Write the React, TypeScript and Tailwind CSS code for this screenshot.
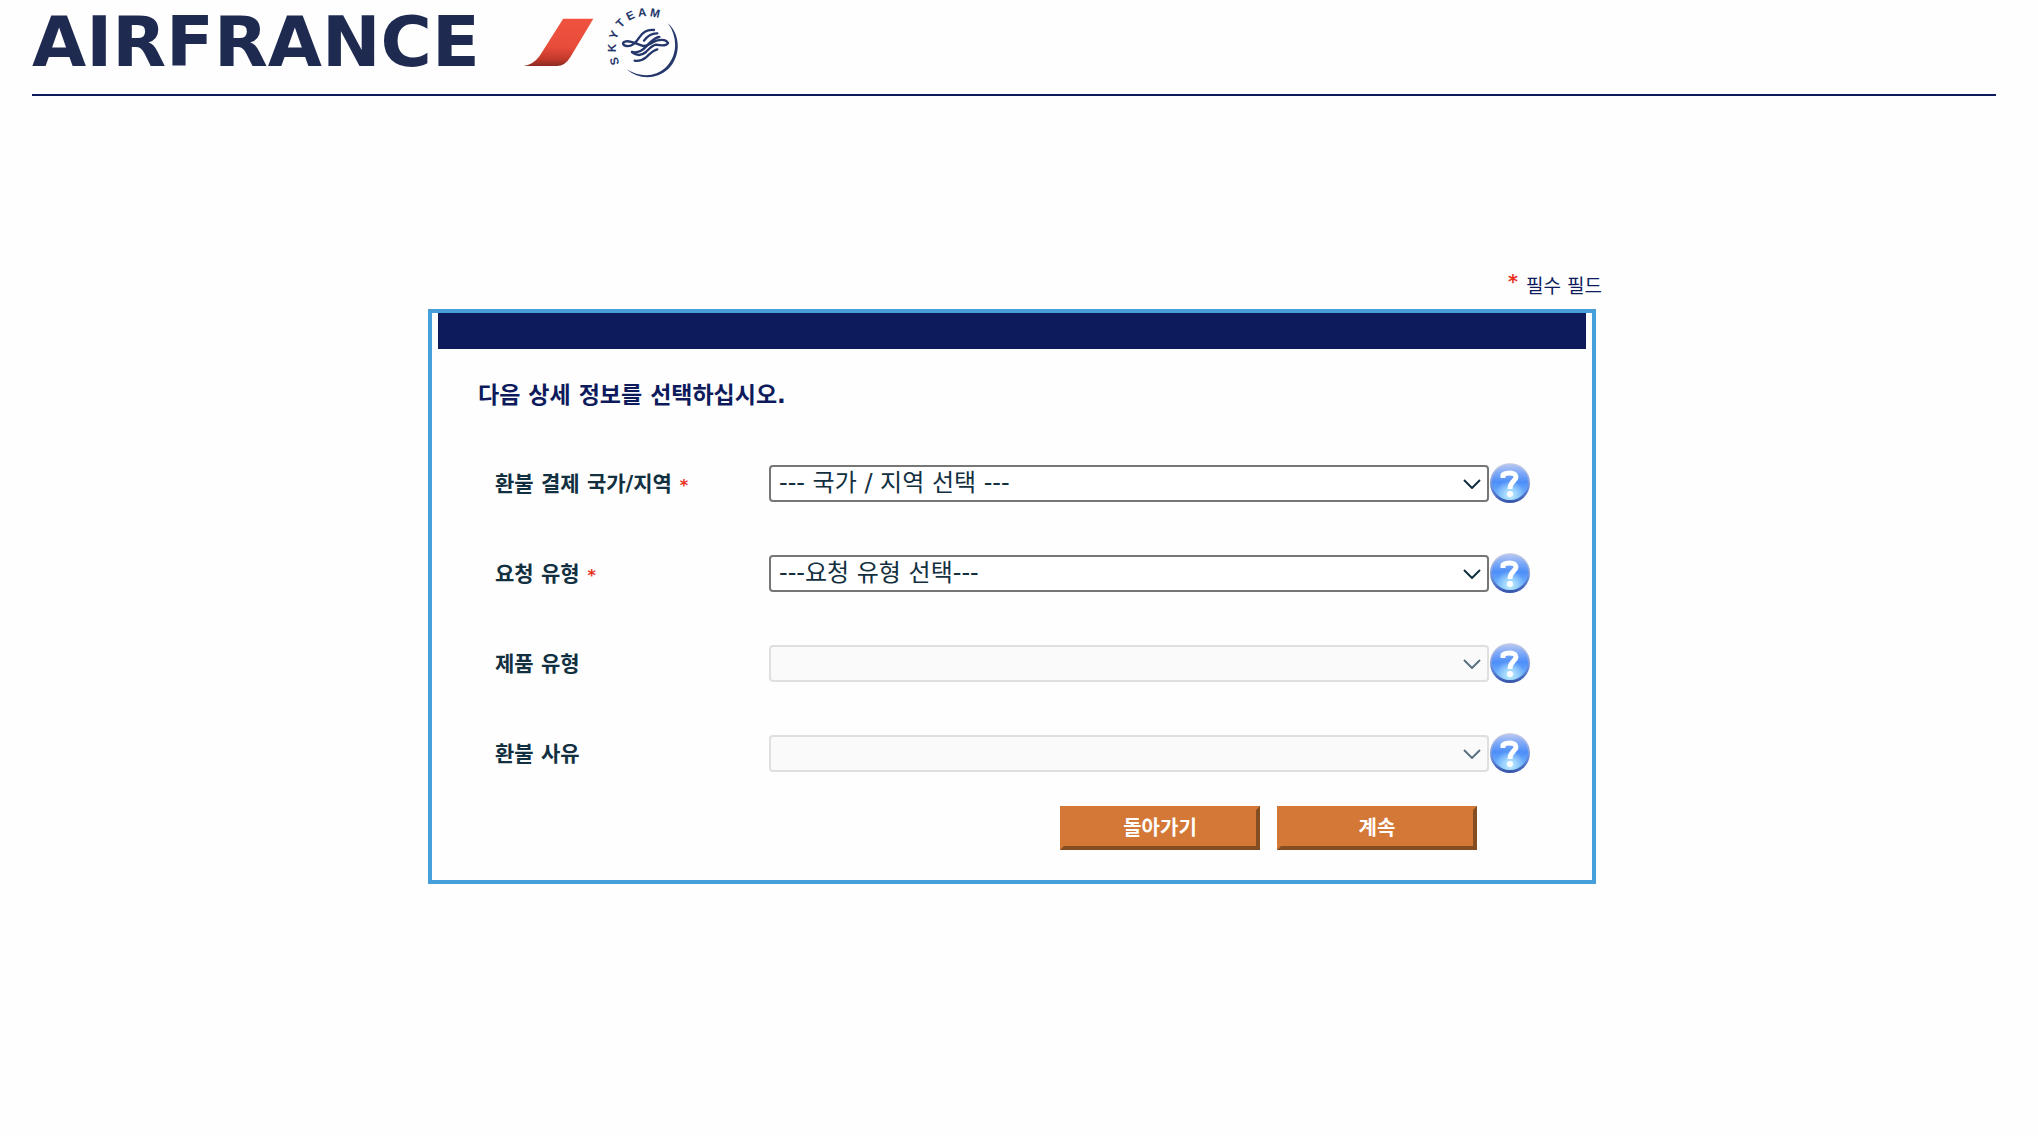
import { ChangeEvent, useState } from "react";

interface Field {
  id: string;
  label: string;
  options: string[];
  required?: boolean;
  disabled?: boolean;
}

const FIELDS: Field[] = [
  {
    id: "country",
    label: "환불 결제 국가/지역",
    options: ["--- 국가 / 지역 선택 ---"],
    required: true,
  },
  {
    id: "requestType",
    label: "요청 유형",
    options: ["---요청 유형 선택---"],
    required: true,
  },
  { id: "productType", label: "제품 유형", options: [""], disabled: true },
  { id: "refundReason", label: "환불 사유", options: [""], disabled: true },
];

// Letters set round the SkyTeam ring: [letter, x, y, angle]
const RING: [string, number, number, number][] = [
  ["S", 835, 181, -104],
  ["K", 828, 144, -88],
  ["Y", 833, 109, -66],
  ["T", 850, 78, -46],
  ["E", 876, 57, -25],
  ["A", 907, 49, -5],
  ["M", 943, 51, 12],
];

function TailFlame() {
  return (
    <svg className="w-[73px] h-[52px]" viewBox="550 40 220 156" aria-hidden="true">
      <defs>
        <linearGradient id="flame" x1="0" y1="0" x2="0" y2="1">
          <stop offset="0" stopColor="#ef5340" />
          <stop offset="0.6" stopColor="#e84c3a" />
          <stop offset="0.85" stopColor="#c33a2c" />
          <stop offset="1" stopColor="#8c2a22" />
        </linearGradient>
      </defs>
      <path
        d="M674 48H765L696 163Q680 190 655 190H555Q584 186 603 160Z"
        fill="url(#flame)"
      />
    </svg>
  );
}

function SkyTeam() {
  return (
    <svg
      className="w-[73px] h-[73px]"
      viewBox="798 18 219 219"
      role="img"
      aria-label="SkyTeam"
    >
      <g
        fill="#24366b"
        fontFamily="'Liberation Sans', sans-serif"
        fontWeight="700"
        fontSize="35"
        textAnchor="middle"
      >
        {RING.map(([letter, x, y, angle]) => (
          <text key={letter} transform={`translate(${x} ${y}) rotate(${angle})`}>
            {letter}
          </text>
        ))}
      </g>
      <path
        d="M984 70C1022 104 1024 168 984 208C948 240 896 240 860 208C900 233 946 232 978 202C1013 166 1014 112 984 70Z"
        fill="#24366b"
      />
      <g fill="none" stroke="#24366b" strokeWidth="7" strokeLinecap="round">
        <path d="M942 90C918 88 908 98 898 112C888 128 876 140 860 138C846 136 846 126 858 124C874 121 892 134 910 138C926 140 936 124 952 121C966 118 980 120 984 129C980 139 964 137 948 134C936 136 928 146 918 156C906 166 892 170 876 156" />
        <path d="M952 100C932 99 922 108 912 122" />
        <path d="M958 111C944 112 934 124 922 136C908 151 896 160 876 156" />
        <path d="M952 148C936 152 928 164 918 172C906 182 896 184 884 182" />
      </g>
    </svg>
  );
}

function HelpIcon({ id }: { id: string }) {
  return (
    <svg className="w-10 h-10" viewBox="0 0 40 40" aria-hidden="true">
      <defs>
        <linearGradient id={`${id}-rim`} x1="0" y1="0" x2="0" y2="1">
          <stop offset="0" stopColor="#d3d2e2" />
          <stop offset="0.35" stopColor="#93abe2" />
          <stop offset="0.7" stopColor="#5d82d6" />
          <stop offset="1" stopColor="#3553a6" />
        </linearGradient>
        <linearGradient id={`${id}-ball`} x1="0" y1="0" x2="0" y2="1">
          <stop offset="0" stopColor="#b9c8f0" />
          <stop offset="0.25" stopColor="#7ea9f8" />
          <stop offset="0.5" stopColor="#4d8ef8" />
          <stop offset="0.75" stopColor="#66a9fb" />
          <stop offset="1" stopColor="#6fb9f6" />
        </linearGradient>
        <radialGradient id={`${id}-glow`} cx="0.5" cy="0.85" r="0.4">
          <stop offset="0" stopColor="#c5f1ff" />
          <stop offset="1" stopColor="#c5f1ff" stopOpacity="0" />
        </radialGradient>
      </defs>
      <circle cx="20" cy="20" r="20" fill={`url(#${id}-rim)`} />
      <circle cx="20" cy="19" r="18" fill={`url(#${id}-ball)`} />
      <circle cx="20" cy="19" r="18" fill={`url(#${id}-glow)`} />
      <path
        d="M13 15V12C15 10 17 10 20 10C24 10 26 12 26 14C26 18 20 18 20 26"
        fill="none"
        stroke="#fff"
        strokeWidth="5"
        strokeLinejoin="round"
      />
      <circle cx="20" cy="31" r="3" fill="#fff" />
    </svg>
  );
}

function Chevron({ disabled }: { disabled?: boolean }) {
  return (
    <svg
      className={`absolute right-2 top-3.5 w-[18px] h-[10px] pointer-events-none ${
        disabled ? "text-[#5b7180]" : "text-[#12303f]"
      }`}
      viewBox="0 0 18 10"
      aria-hidden="true"
    >
      <path d="M1 1L9 9L17 1" fill="none" stroke="currentColor" strokeWidth="2" />
    </svg>
  );
}

function FieldRow({ field }: { field: Field }) {
  const [value, setValue] = useState(field.options[0]);

  return (
    <div className="flex items-center h-10">
      <label htmlFor={field.id} className="w-[274px] shrink-0 pt-1 text-[21px] font-bold">
        {field.label}
        {field.required && (
          <span className="ml-2 text-base text-[#e8301c]">*</span>
        )}
      </label>
      <div className="relative flex-1">
        <select
          id={field.id}
          value={value}
          disabled={field.disabled}
          required={field.required}
          onChange={(e: ChangeEvent<HTMLSelectElement>) => setValue(e.target.value)}
          className="block w-full h-[37px] appearance-none rounded border-2 border-[#767676] bg-white pl-2 pr-8 text-2xl leading-8 disabled:border-[#dfdfdf] disabled:bg-[#fafafa]"
        >
          {field.options.map((option) => (
            <option key={option}>{option}</option>
          ))}
        </select>
        <Chevron disabled={field.disabled} />
      </div>
      <button type="button" aria-label={`${field.label} 도움말`} className="ml-px shrink-0">
        <HelpIcon id={field.id} />
      </button>
    </div>
  );
}

function FormButton({ label, type }: { label: string; type: "button" | "submit" }) {
  return (
    <button
      type={type}
      className="w-[200px] h-11 border-4 border-t-[#d37836] border-l-[#d37836] border-r-[#854d22] border-b-[#854d22] bg-[#d37836] text-xl leading-8 font-bold text-white"
    >
      {label}
    </button>
  );
}

export default function App() {
  return (
    <div className="min-h-screen bg-[#fefefe] font-['DejaVu_Sans','Noto_Sans_CJK_KR',sans-serif] text-[#12303f]">
      <header className="pl-8 pr-[42px]">
        <div className="flex items-center h-[84px]">
          <span className="w-[490px] shrink-0 text-[70px] leading-none font-bold text-[#1e2a4f]">
            AIRFRANCE
          </span>
          <TailFlame />
          <div className="ml-[11px]">
            <SkyTeam />
          </div>
        </div>
        <hr className="mt-2.5 border-t-2 border-[#0d1b5c]" />
      </header>

      <main className="pt-[173px] pl-8 pr-10">
        <div className="mx-auto max-w-[1174px]">
          <p className="flex justify-end h-10 text-[19px] leading-[34px] text-[#0d1b5c]">
            <span className="mr-2 leading-6 font-bold text-[#e8301c]">*</span>
            필수 필드
          </p>

          <form
            onSubmit={(e) => e.preventDefault()}
            className="mr-1.5 border-4 border-[#479fda] px-1.5 pb-[30px]"
          >
            <div className="h-9 bg-[#0d1b5c]" />
            <h1 className="mt-7 ml-10 text-[23px] leading-9 font-bold text-[#0d1b5c]">
              다음 상세 정보를 선택하십시오.
            </h1>
            <div className="mt-[50px] pl-[57px] pr-14 space-y-[50px]">
              {FIELDS.map((field) => (
                <FieldRow key={field.id} field={field} />
              ))}
            </div>
            <div className="flex justify-end gap-[17px] mt-[33px] pr-[109px]">
              <FormButton label="돌아가기" type="button" />
              <FormButton label="계속" type="submit" />
            </div>
          </form>
        </div>
      </main>
    </div>
  );
}
